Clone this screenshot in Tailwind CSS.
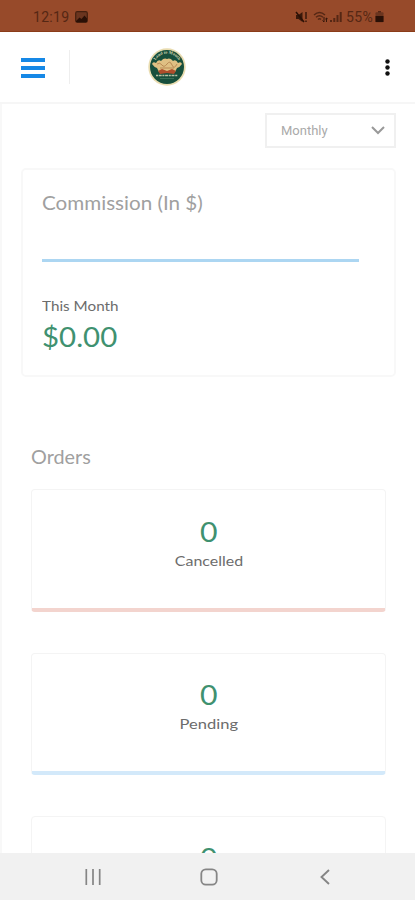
<!DOCTYPE html>
<html lang="en">
<head>
<meta charset="utf-8">
<meta name="viewport" content="width=device-width, initial-scale=1">
<title>Dashboard</title>
<script src="https://cdn.jsdelivr.net/npm/@tailwindcss/browser@4"></script>
</head>
<body class="bg-white">
<div class="w-[415px] h-[900px] flex flex-col overflow-hidden bg-white font-['Lato',sans-serif]">
  <!-- status bar -->
  <div class="h-8 shrink-0 bg-[#974a2a] border-b border-[#8b3c18] flex items-center justify-between pl-[33px] pr-[31px] pt-[3px] text-[#552714] font-['Roboto',sans-serif]">
    <div class="flex items-center gap-[6px]">
      <span class="text-[14px] leading-4 tracking-[0.3px]">12:19</span>
      <svg class="w-[13px] h-[12px]" viewBox="0 0 13 12"><rect x=".7" y=".7" width="11.6" height="10.6" rx="1.5" fill="#6b351f" stroke="#45200f" stroke-width="1.2"/><path d="M1 10 4.5 6.5 6.5 8 9.5 4.5 12 7.500V11H1Z" fill="#2a1006"/></svg>
    </div>
    <div class="flex items-center">
      <svg class="w-[13px] h-[12px] mr-[5px]" viewBox="0 0 13 12"><path d="M1 4h2.500L7.500 1v10L3.500 8H1Z" fill="#3a190b"/><path d="M1 1 9 11" stroke="#2a1006" stroke-width="1.500"/><path d="M11 1v7M11 9.500v1.500" stroke="#3a190b" stroke-width="1.500"/></svg>
      <svg class="w-[15px] h-[12px] mr-[2px]" viewBox="0 0 15 12" fill="none" stroke="#552714" stroke-width="1.400"><path d="M1 4Q6.500-1 12 4M3 6.300Q6.500 3 10 6.300M5 8.500Q6.500 7 8 8.500"/><path d="M11 6v5M9.500 9.500 11 11M13.500 11V7M12.300 8.200l1.200-1.200 1.200 1.200" stroke="#35170a" stroke-width="1"/></svg>
      <svg class="w-[12px] h-[12px] mr-[4px]" viewBox="0 0 12 12" fill="#552714"><path d="M0 9h2v2H0zM3.300 7h2v4h-2zM6.500 4h2v7h-2zM9.700 1h2v10h-2z"/></svg>
      <span class="text-[14px] leading-4 tracking-[0.3px]">55%</span>
      <svg class="w-[9px] h-[12px] ml-[2px]" viewBox="0 0 9 12"><path d="M3 0h3v2H3z" fill="#552714"/><rect x=".5" y="1.300" width="8" height="10" rx="1" fill="#6b351f"/><path d="M.5 5h8v6h-8z" fill="#2a1006"/></svg>
    </div>
  </div>
  <!-- app header -->
  <header class="h-[72px] shrink-0 border-b-2 border-[#f6f6f6] flex items-center">
    <svg class="w-6 h-5 ml-[21px] mt-px" viewBox="0 0 24 20" fill="#1688e6"><path d="M0 0h24v4H0zM0 8h24v4H0zM0 16h24v4H0z"/></svg>
    <div class="w-px h-[34px] bg-[#eeeeee] ml-6"></div>
    <svg class="w-[38px] h-[38px] ml-[78px]" viewBox="0 0 38 38">
      <circle cx="19" cy="19" r="18.700" fill="#e9dcb0"/>
      <circle cx="19" cy="19" r="17" fill="#174f3c"/>
      <path id="ring" d="M6.500 14.500A13.200 13.200 0 0 1 31.500 14.500" fill="none"/>
      <text font-family="Liberation Serif, serif" font-size="4.300" font-weight="700" fill="#d8d6b2"><textPath href="#ring" startOffset="50%" text-anchor="middle">Land to Mouth</textPath></text>
      <path d="M4 16Q5 13 8 15 10 11 13 13 16 9.500 19 11 22 9.500 25 13 28 11 30 15 33 13 34 16 32 19 29 20L27 24H11L9 20Q6 19 4 16Z" fill="#dfc083"/>
      <path d="M9 16q3-2 5 1t5-1 5 1 5-1M12 20h14" stroke="#b98a54" fill="none"/>
      <path d="m10 23 4-2 5 2 5-2 4 2-2 3-7-1-7 1Z" fill="#ad4d2b"/>
      <path d="M8 27.500h22" stroke="#b9c0a2" stroke-width="1.500" stroke-dasharray="2 .7 3 .7"/>
      <path d="M12 30.500h14" stroke="#386d55"/>
    </svg>
    <svg class="w-[5px] h-[17px] ml-auto mr-[25px]" viewBox="0 0 5 17" fill="#111"><circle cx="2.500" cy="2.500" r="2.200"/><circle cx="2.500" cy="8.500" r="2.200"/><circle cx="2.500" cy="14.500" r="2.200"/></svg>
  </header>
  <!-- page -->
  <main class="h-[749px] shrink-0 overflow-hidden border-l-2 border-[#f8f8f8] pt-[9px]">
    <div class="ml-auto mr-[19px] w-[131px] h-[35px] border-2 border-[#f0f0f0] flex items-center justify-between pl-[14px] pr-[9px]">
      <span class="font-['Roboto',sans-serif] text-[13px] text-[#aaaaaa]">Monthly</span>
      <svg class="w-[14px] h-[9px]" viewBox="0 0 14 9" fill="none" stroke="#999" stroke-width="2"><path d="m1 1 6 6 6-6"/></svg>
    </div>
    <section class="mt-5 ml-[19px] w-[375px] h-[209px] border-2 border-[#f8f8f8] rounded-[5px] pl-[19px] pt-[21px]">
      <h2 class="h-6 leading-6 text-[18.5px] text-[#a0a0a0] w-max origin-left scale-x-[1.115]">Commission (In $)</h2>
      <div class="mt-[44px] w-[317px] h-[3px] bg-[#acd6f2]"></div>
      <p class="mt-[34px] h-5 leading-5 text-[14px] text-[#6c6c6c] w-max origin-left scale-x-[1.09]">This Month</p>
      <p class="mt-[5px] h-8 leading-8 text-[27px] text-[#3f9170] w-max origin-left scale-x-[1.09]">$0.00</p>
    </section>
    <section class="ml-[29px] w-[355px]">
      <h2 class="mt-[68px] h-6 leading-6 text-[18.5px] text-[#a0a0a0] w-max origin-left scale-x-[1.07]">Orders</h2>
      <div class="mt-5 h-[123px] border border-[#f4f4f4] border-b-4 border-b-[#f3d4ce] rounded-[4px] flex flex-col items-center pt-[26px]">
        <p class="h-8 leading-8 text-[27px] text-[#3f9170] scale-x-[1.12]">0</p>
        <p class="mt-[3px] h-5 leading-5 text-[14px] text-[#6c6c6c] scale-x-[1.14]">Cancelled</p>
      </div>
      <div class="mt-[41px] h-[122px] border border-[#f4f4f4] border-b-4 border-b-[#d3e9fa] rounded-[4px] flex flex-col items-center pt-[25px]">
        <p class="h-8 leading-8 text-[27px] text-[#3f9170] scale-x-[1.12]">0</p>
        <p class="mt-[3px] h-5 leading-5 text-[14px] text-[#6c6c6c] scale-x-[1.18]">Pending</p>
      </div>
      <div class="mt-[41px] h-[123px] border border-[#f4f4f4] rounded-[4px] flex flex-col items-center pt-[25px]">
        <p class="h-8 leading-8 text-[27px] text-[#3f9170] scale-x-[1.12]">0</p>
      </div>
    </section>
  </main>
  <!-- system navigation -->
  <nav class="grow bg-[#f1f1f1] flex items-center">
    <svg class="w-4 h-4 ml-[85px]" viewBox="0 0 16 16" stroke="#858585" stroke-width="1.700"><path d="M1.300 0v16M8 0v16M14.700 0v16"/></svg>
    <svg class="w-[18px] h-[18px] ml-[99px]" viewBox="0 0 18 18" fill="none" stroke="#858585" stroke-width="1.800"><rect x="1.300" y="1.300" width="15.400" height="15.400" rx="4.500"/></svg>
    <svg class="w-[10px] h-4 ml-[102px]" viewBox="0 0 10 16" fill="none" stroke="#858585" stroke-width="1.900"><path d="M9 1 1.500 8 9 15"/></svg>
  </nav>
</div>
</body>
</html>
